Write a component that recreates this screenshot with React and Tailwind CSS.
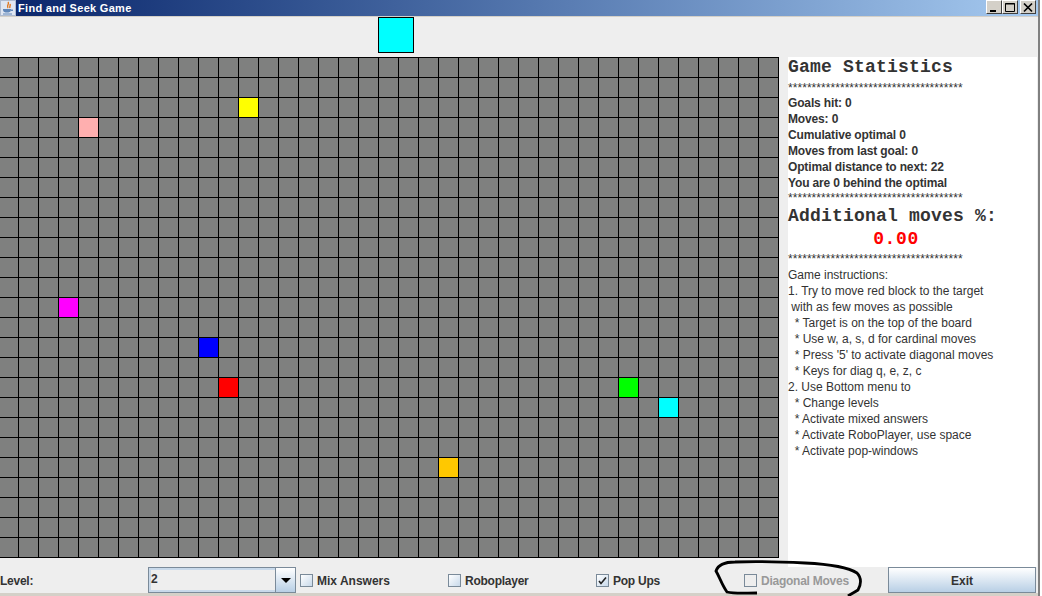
import React from 'react';

const ROWS = 25;
const COLS = 39;

// row/col -> block colour
const blocks = {
  '2-12': 'bg-[#ffff00]',
  '3-4': 'bg-[#ffafaf]',
  '12-3': 'bg-[#ff00ff]',
  '14-10': 'bg-[#0000ff]',
  '16-11': 'bg-[#ff0000]',
  '16-31': 'bg-[#00ff00]',
  '17-33': 'bg-[#00ffff]',
  '20-22': 'bg-[#ffc800]',
};

const stats = [
  'Goals hit: 0',
  'Moves: 0',
  'Cumulative optimal 0',
  'Moves from last goal: 0',
  'Optimal distance to next: 22',
  'You are 0 behind the optimal',
];

const instructions = [
  'Game instructions:',
  '1. Try to move red block to the target',
  ' with as few moves as possible',
  '  * Target is on the top of the board',
  '  * Use w, a, s, d for cardinal moves',
  "  * Press '5' to activate diagonal moves",
  '  * Keys for diag q, e, z, c',
  '2. Use Bottom menu to',
  '  * Change levels',
  '  * Activate mixed answers',
  '  * Activate RoboPlayer, use space',
  '  * Activate pop-windows',
];

const stars = '*************************************';

const JavaIcon = () => (
  <svg width="16" height="16" viewBox="0 0 16 16" className="shrink-0">
    <rect x="0.5" y="0.5" width="15" height="15" fill="#dfe6f2" stroke="#aebbd0" />
    <path d="M8 2 C10 4 6 5 8 8 M10 4 C11 6 9 6 10 8" fill="none" stroke="#e0761c" strokeWidth="1.4" />
    <path d="M3 9 H11 V10 C11 12 9 12.500 7 12.500 C5 12.500 3 12 3 10 Z M11 9.500 H13 V11 H11" fill="#5f86b8" />
    <path d="M3 14 H12" stroke="#5f86b8" strokeWidth="1" />
  </svg>
);

const WinButton = ({ children }) => (
  <div className="w-4 h-[14px] bg-[#d4d0c8] border border-t-white border-l-white border-r-[#404040] border-b-[#404040] flex items-center justify-center">
    <svg width="12" height="11" viewBox="0 0 12 11">{children}</svg>
  </div>
);

const Check = ({ label, checked, disabled, className, labelClass = 'tracking-[-0.25px]' }) => (
  <div className={`flex items-center gap-[4px] ${className}`}>
    <div
      className={`w-[13px] h-[13px] border border-[#7a8a99] flex items-center justify-center ${
        disabled ? 'bg-[#eeeeee]' : 'bg-gradient-to-br from-white to-[#c8d9ea]'
      }`}
    >
      {checked && (
        <svg width="9" height="9" viewBox="0 0 9 9">
          <path d="M1 5 L3 7.500 L8 1.500" fill="none" stroke="#222" strokeWidth="1.6" />
        </svg>
      )}
    </div>
    <span className={`font-bold text-[12px] pt-[1px] ${labelClass} ${disabled ? 'text-[#999999]' : 'text-[#333333]'}`}>{label}</span>
  </div>
);

const App = () => {
  const cells = [];
  for (let r = 0; r < ROWS; r++) {
    for (let c = 0; c < COLS; c++) {
      cells.push(
        <div key={`${r}-${c}`} className={`border-l border-t border-black ${blocks[`${r}-${c}`] || 'bg-[#7f807f]'}`} />
      );
    }
  }

  return (
    <div className="relative w-[1042px] h-[596px] overflow-hidden flex bg-white font-['Liberation_Sans',sans-serif]">
      <div className="w-[1040px] h-full flex flex-col border-r-2 border-[#808080] bg-[#eeeeee]">
        {/* title bar */}
        <div className="h-[16px] shrink-0 flex items-center justify-between bg-gradient-to-r from-[#0a246a] to-[#a6caf0] border-b border-[#d4d0c8] box-content -mb-px">
          <div className="flex items-center gap-[2px]">
            <JavaIcon />
            <span className="text-white font-bold text-[11px] tracking-[0.3px] leading-none">Find and Seek Game</span>
          </div>
          <div className="flex items-center pr-[2px] self-start">
            <WinButton>
              <rect x="2" y="8" width="6" height="2" fill="#000" />
            </WinButton>
            <WinButton>
              <path d="M1.500 1.500 H10.500 V9.500 H1.500 Z M1 2 H11" fill="none" stroke="#000" strokeWidth="1" />
            </WinButton>
            <div className="w-[2px]" />
            <WinButton>
              <path d="M2 1.500 L10 9.500 M10 1.500 L2 9.500" stroke="#000" strokeWidth="1.700" />
            </WinButton>
          </div>
        </div>

        {/* target preview */}
        <div className="h-[41px] shrink-0 pl-[378px] pt-[1px]">
          <div className="w-[36px] h-[36px] bg-[#00ffff] border border-black" />
        </div>

        {/* board + side panel */}
        <div className="h-[510px] shrink-0 flex items-start">
          <div className="-ml-[2px] w-[781px] h-[501px] shrink-0 grid grid-cols-[repeat(39,20px)] grid-rows-[repeat(25,20px)] border-r border-b border-black">
            {cells}
          </div>
          <div className="ml-[9px] w-[249px] h-full bg-white text-[#333333] text-[12px] leading-4 whitespace-pre">
            <div className="font-['Liberation_Mono',monospace] font-bold text-[18px] tracking-[0.2px] h-[20px] leading-[20px]">Game Statistics</div>
            <div className="h-[16px] mt-[3px] tracking-[0.05px]">{stars}</div>
            <div className="-mt-[1px] font-bold tracking-[-0.15px]">
              {stats.map((s) => (
                <div key={s}>{s}</div>
              ))}
            </div>
            <div className="h-[16px] -mt-px tracking-[0.05px]">{stars}</div>
            <div className="font-['Liberation_Mono',monospace] font-bold text-[18px] tracking-[0.2px] h-[20px] leading-[20px]">Additional moves %:</div>
            <div className="w-[216px] text-center font-['Liberation_Mono',monospace] font-bold text-[18px] tracking-[0.6px] leading-[20px] text-[#ff0000] mt-[3px]">0.00</div>
            <div className="h-[16px] mt-[2px] tracking-[0.05px]">{stars}</div>
            <div>
              {instructions.map((s) => (
                <div key={s}>{s}</div>
              ))}
            </div>
          </div>
        </div>

        {/* bottom menu */}
        <div className="h-[26px] shrink-0 flex items-center text-[#333333]">
          <span className="w-[148px] shrink-0 font-bold text-[12px] tracking-[-0.25px] pt-[1px]">Level:</span>
          <div className="w-[148px] h-[26px] shrink-0 flex border border-[#7a8a99]">
            <div className="flex-1 bg-[#eeeeee] border-2 border-[#c8d9ea] border-r-0 text-[12px] font-bold tracking-[-0.25px] leading-[18px]">2</div>
            <div className="w-[20px] border-l border-[#7a8a99] bg-gradient-to-b from-white to-[#b8cfe5] flex items-center justify-center">
              <div className="w-0 h-0 border-l-[5px] border-r-[5px] border-t-[5px] border-l-transparent border-r-transparent border-t-black" />
            </div>
          </div>
          <Check label="Mix Answers" labelClass="tracking-[0px]" className="ml-[4px] w-[148px]" />
          <Check label="Roboplayer" className="w-[148px]" />
          <Check label="Pop Ups" checked className="w-[148px]" />
          <Check label="Diagonal Moves" disabled className="w-[144px]" />
          <div className="w-[148px] h-[26px] shrink-0 border border-[#7a8a99] bg-gradient-to-b from-white to-[#b8cfe5] flex items-center justify-center font-bold text-[12px] pt-[1px]">
            Exit
          </div>
        </div>

        <div className="flex-1 bg-[#d4d0c8]" />
      </div>

      {/* hand drawn circle around the disabled option */}
      <svg className="absolute left-[710px] top-[556px] pointer-events-none" width="160" height="40" viewBox="710 556 160 40">
        <path
          d="M757 593 C745 593 735 594 727 592 C722 585 720 578 716 571 C718 565 724 562 735 562 C760 561 785 562 805 563 C825 564 848 567 857 573 C862 578 861 585 858 590 C855 592 851 594 848 596"
          fill="none"
          stroke="#000"
          strokeWidth="2.800"
        />
      </svg>
    </div>
  );
};

export default App;
